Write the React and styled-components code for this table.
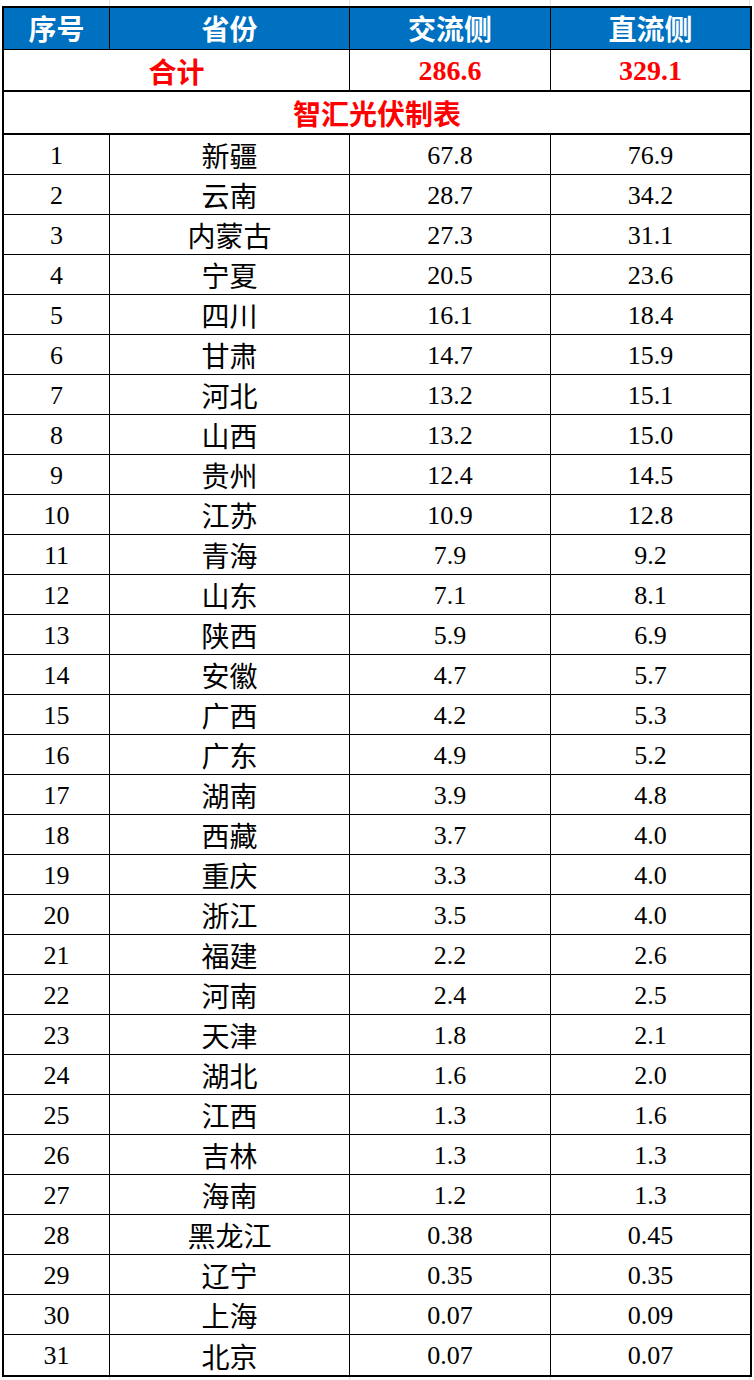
import React from "react";
import styled, { createGlobalStyle } from "styled-components";

const GlobalStyle = createGlobalStyle`
  html, body {
    margin: 0;
    padding: 0;
    background: #ffffff;
  }
  * {
    box-sizing: border-box;
  }
`;

const COLS = "106px 240px 201px 199px";

const Page = styled.div`
  width: 754px;
  padding-left: 2px;
`;

const GridStrip = styled.div`
  display: grid;
  grid-template-columns: ${COLS};
  height: ${(p) => p.$h}px;
  margin-left: 2px;

  & > span {
    border-right: 1px solid #e3e3e3;
  }
`;

const Sheet = styled.div`
  width: 750px;
  border: 2px solid #000;
  display: grid;
  grid-template-columns: ${COLS};
  font-family: "Liberation Serif", "Noto Sans CJK SC", serif;
`;

const Cell = styled.div`
  display: flex;
  align-items: center;
  justify-content: center;
  height: ${(p) => p.$h || 40}px;
  border-right: ${(p) => (p.$last ? "none" : "1px solid #000")};
  border-bottom: ${(p) => (p.$bottom === undefined ? 1 : p.$bottom)}px solid #000;
  grid-column: ${(p) => p.$span || "auto"};
  font-size: 26px;
  color: #000;
  white-space: nowrap;
  padding-top: 2px;
`;

const HeadCell = styled(Cell)`
  background: #0070c0;
  color: #ffffff;
  font-family: "Noto Sans CJK SC", sans-serif;
  font-weight: 700;
  font-size: 28px;
  padding-top: 0;
  padding-bottom: 1px;
`;

const TotalLabel = styled(Cell)`
  color: #ff0000;
  font-family: "Noto Sans CJK SC", sans-serif;
  font-weight: 700;
  font-size: 28px;
  padding-top: 1px;
`;

const TotalNum = styled(Cell)`
  color: #ff0000;
  font-family: "Liberation Serif", serif;
  font-weight: 700;
  font-size: 28px;
`;

const Province = styled(Cell)`
  font-family: "Noto Sans CJK SC", sans-serif;
  font-size: 28px;
  padding-top: 1px;
`;

const rows = [
  ["新疆", "67.8", "76.9"],
  ["云南", "28.7", "34.2"],
  ["内蒙古", "27.3", "31.1"],
  ["宁夏", "20.5", "23.6"],
  ["四川", "16.1", "18.4"],
  ["甘肃", "14.7", "15.9"],
  ["河北", "13.2", "15.1"],
  ["山西", "13.2", "15.0"],
  ["贵州", "12.4", "14.5"],
  ["江苏", "10.9", "12.8"],
  ["青海", "7.9", "9.2"],
  ["山东", "7.1", "8.1"],
  ["陕西", "5.9", "6.9"],
  ["安徽", "4.7", "5.7"],
  ["广西", "4.2", "5.3"],
  ["广东", "4.9", "5.2"],
  ["湖南", "3.9", "4.8"],
  ["西藏", "3.7", "4.0"],
  ["重庆", "3.3", "4.0"],
  ["浙江", "3.5", "4.0"],
  ["福建", "2.2", "2.6"],
  ["河南", "2.4", "2.5"],
  ["天津", "1.8", "2.1"],
  ["湖北", "1.6", "2.0"],
  ["江西", "1.3", "1.6"],
  ["吉林", "1.3", "1.3"],
  ["海南", "1.2", "1.3"],
  ["黑龙江", "0.38", "0.45"],
  ["辽宁", "0.35", "0.35"],
  ["上海", "0.07", "0.09"],
  ["北京", "0.07", "0.07"],
];

const Strip = ({ h }) => (
  <GridStrip $h={h}>
    <span />
    <span />
    <span />
    <span />
  </GridStrip>
);

export default function App() {
  return (
    <Page>
      <GlobalStyle />
      <Strip h={6} />
      <Sheet>
        <HeadCell $h={42}>序号</HeadCell>
        <HeadCell $h={42}>省份</HeadCell>
        <HeadCell $h={42}>交流侧</HeadCell>
        <HeadCell $h={42} $last>直流侧</HeadCell>

        <TotalLabel $h={42} $bottom={2} $span="1 / 3">合计</TotalLabel>
        <TotalNum $h={42} $bottom={2}>286.6</TotalNum>
        <TotalNum $h={42} $bottom={2} $last>329.1</TotalNum>

        <TotalLabel $h={43} $bottom={2} $span="1 / 5" $last>智汇光伏制表</TotalLabel>

        {rows.map(([name, ac, dc], i) => {
          const end = i === rows.length - 1;
          const b = end ? 0 : 1;
          return (
            <React.Fragment key={name}>
              <Cell $bottom={b}>{i + 1}</Cell>
              <Province $bottom={b}>{name}</Province>
              <Cell $bottom={b}>{ac}</Cell>
              <Cell $bottom={b} $last>{dc}</Cell>
            </React.Fragment>
          );
        })}
      </Sheet>
      <Strip h={3} />
    </Page>
  );
}
